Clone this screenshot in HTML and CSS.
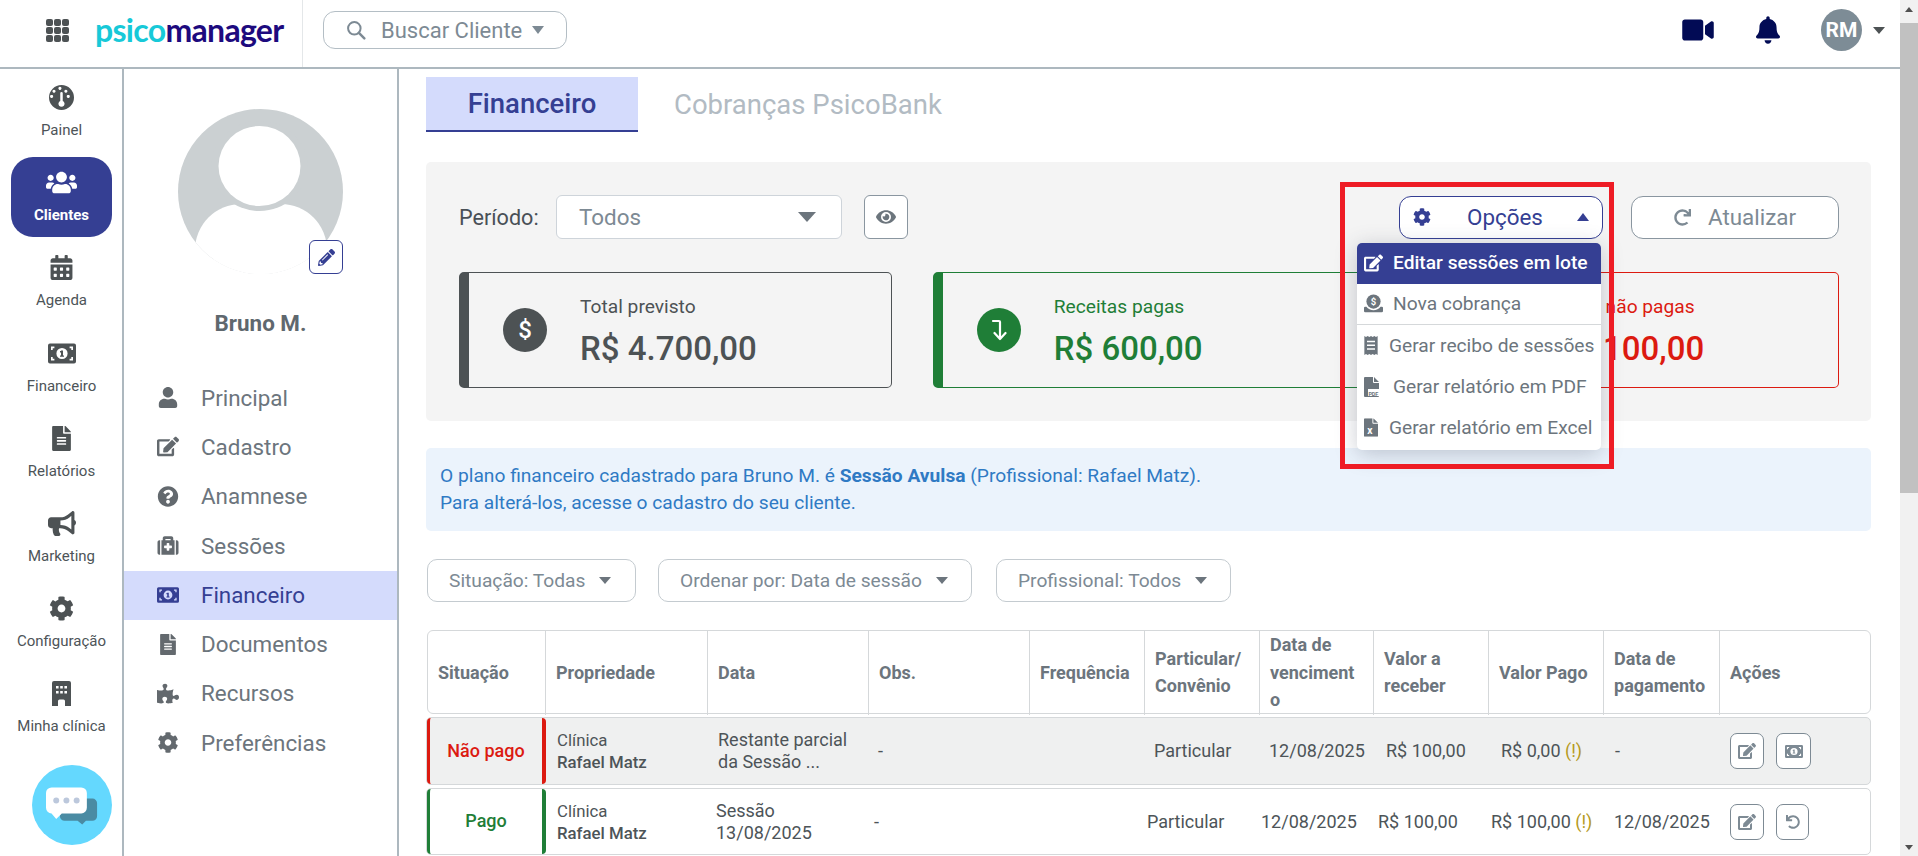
FILE: index.html
```html
<!DOCTYPE html>
<html lang="pt-BR">
<head>
<meta charset="utf-8">
<title>PsicoManager</title>
<link rel="stylesheet" href="styles.css">
</head>
<body>
<svg class="sprite" xmlns="http://www.w3.org/2000/svg">
  <symbol id="i-search" viewBox="0 0 24 24"><circle cx="10" cy="10" r="7.5" fill="none" stroke="currentColor" stroke-width="2.4"/><path d="M15.5 15.5L22 22" stroke="currentColor" stroke-width="3" stroke-linecap="round"/></symbol>
  <symbol id="i-video" viewBox="0 0 576 512"><path d="M336.2 64H47.8C21.4 64 0 85.4 0 111.8v288.4C0 426.6 21.4 448 47.8 448h288.4c26.4 0 47.8-21.4 47.8-47.8V111.8c0-26.4-21.4-47.8-47.8-47.8zm189.4 37.7L416 177.3v157.4l109.6 75.5c21.2 14.6 50.4-.3 50.4-25.8V127.5c0-25.4-29.1-40.4-50.4-25.8z"/></symbol>
  <symbol id="i-bell" viewBox="0 0 448 512"><path d="M224 512c35.32 0 63.97-28.65 63.97-64H160.03c0 35.35 28.65 64 63.97 64zm215.39-149.71c-19.32-20.76-55.47-51.99-55.47-154.29 0-77.7-54.48-139.9-127.94-155.16V32c0-17.67-14.32-32-31.98-32s-31.98 14.33-31.98 32v20.84C118.56 68.1 64.08 130.3 64.08 208c0 102.3-36.15 133.53-55.47 154.29-6 6.45-8.66 14.16-8.61 21.71.11 16.4 12.98 32 32.1 32h383.8c19.12 0 32-15.6 32.1-32 .05-7.55-2.61-15.27-8.61-21.71z"/></symbol>
  <symbol id="i-cog" viewBox="0 0 512 512"><path d="M487.4 315.7l-42.6-24.6c4.3-23.2 4.3-47 0-70.2l42.6-24.6c4.9-2.8 7.1-8.6 5.5-14-11.1-35.6-30-67.8-54.7-94.6-3.8-4.1-10-5.1-14.8-2.3L380.8 110c-17.9-15.4-38.5-27.3-60.8-35.1V25.8c0-5.6-3.9-10.5-9.4-11.7-36.7-8.2-74.3-7.8-109.2 0-5.5 1.2-9.4 6.1-9.4 11.7V75c-22.2 7.9-42.8 19.8-60.8 35.1L88.7 85.5c-4.9-2.8-11-1.9-14.8 2.3-24.7 26.7-43.6 58.9-54.7 94.6-1.7 5.4.6 11.2 5.5 14L67.3 221c-4.3 23.2-4.3 47 0 70.2l-42.6 24.6c-4.9 2.8-7.1 8.6-5.5 14 11.1 35.6 30 67.8 54.7 94.6 3.8 4.1 10 5.1 14.8 2.3l42.6-24.6c17.9 15.4 38.5 27.3 60.8 35.1v49.2c0 5.6 3.9 10.5 9.4 11.7 36.7 8.2 74.3 7.8 109.2 0 5.5-1.2 9.4-6.1 9.4-11.7v-49.2c22.2-7.9 42.8-19.8 60.8-35.1l42.6 24.6c4.9 2.8 11 1.9 14.8-2.3 24.7-26.7 43.6-58.9 54.7-94.6 1.5-5.5-.7-11.3-5.6-14.1zM256 336c-44.1 0-80-35.9-80-80s35.9-80 80-80 80 35.9 80 80-35.9 80-80 80z"/></symbol>
  <symbol id="i-user" viewBox="0 0 448 512"><path d="M224 256c70.7 0 128-57.3 128-128S294.7 0 224 0 96 57.3 96 128s57.3 128 128 128zm89.6 32h-16.7c-22.2 10.2-46.9 16-72.9 16s-50.6-5.8-72.9-16h-16.7C60.2 288 0 348.2 0 422.4V464c0 26.5 21.5 48 48 48h352c26.5 0 48-21.5 48-48v-41.6c0-74.2-60.2-134.4-134.4-134.4z"/></symbol>
  <symbol id="i-edit" viewBox="0 0 576 512"><path d="M402.6 83.2l90.2 90.2c3.8 3.8 3.8 10 0 13.8L274.4 405.6l-92.8 10.3c-12.4 1.4-22.9-9.1-21.5-21.5l10.3-92.8L388.8 83.2c3.8-3.8 10-3.8 13.8 0zm162-22.9l-48.8-48.8c-15.2-15.2-39.9-15.2-55.2 0l-35.4 35.4c-3.8 3.8-3.8 10 0 13.8l90.2 90.2c3.8 3.8 10 3.8 13.8 0l35.4-35.4c15.2-15.3 15.2-40 0-55.2zM384 346.2V448H64V128h229.8c3.2 0 6.2-1.3 8.5-3.5l40-40c7.6-7.6 2.2-20.5-8.5-20.5H48C21.5 64 0 85.5 0 112v352c0 26.5 21.5 48 48 48h352c26.5 0 48-21.5 48-48V306.2c0-10.7-12.9-16-20.5-8.5l-40 40c-2.2 2.3-3.5 5.3-3.5 8.5z"/></symbol>
  <symbol id="i-question" viewBox="0 0 512 512"><path d="M504 256c0 136.997-111.043 248-248 248S8 392.997 8 256C8 119.083 119.043 8 256 8s248 111.083 248 248zM262.655 90c-54.497 0-89.255 22.957-116.549 63.758-3.536 5.286-2.353 12.415 2.715 16.258l34.699 26.31c5.205 3.947 12.621 3.008 16.665-2.122 17.864-22.658 30.113-35.797 57.303-35.797 20.429 0 45.698 13.148 45.698 32.958 0 14.976-12.363 22.667-32.534 33.976C247.128 238.528 216 254.941 216 296v4c0 6.627 5.373 12 12 12h56c6.627 0 12-5.373 12-12v-1.333c0-28.462 83.186-29.647 83.186-106.667 0-58.002-60.165-102-116.531-102zM256 338c-25.365 0-46 20.635-46 46 0 25.364 20.635 46 46 46s46-20.636 46-46c0-25.365-20.635-46-46-46z"/></symbol>
  <symbol id="i-file" viewBox="0 0 384 512"><path d="M224 136V0H24C10.7 0 0 10.7 0 24v464c0 13.3 10.7 24 24 24h336c13.3 0 24-10.7 24-24V160H248c-13.2 0-24-10.8-24-24zm64 236c0 6.6-5.4 12-12 12H108c-6.6 0-12-5.4-12-12v-8c0-6.6 5.4-12 12-12h168c6.6 0 12 5.4 12 12v8zm0-64c0 6.6-5.4 12-12 12H108c-6.6 0-12-5.4-12-12v-8c0-6.6 5.4-12 12-12h168c6.6 0 12 5.4 12 12v8zm0-72v8c0 6.6-5.4 12-12 12H108c-6.6 0-12-5.4-12-12v-8c0-6.6 5.4-12 12-12h168c6.6 0 12 5.4 12 12zm96-114.1v6.1H256V0h6.1c6.4 0 12.5 2.5 17 7l97.9 98c4.5 4.5 7 10.6 7 16.9z"/></symbol>
  <symbol id="i-bullhorn" viewBox="0 0 576 512"><path d="M576 240c0-23.63-12.95-44.04-32-55.12V32.01C544 23.26 537.02 0 512 0c-7.12 0-14.19 2.38-19.98 7.02l-85.03 68.03C364.28 109.19 310.66 128 256 128H64c-35.35 0-64 28.65-64 64v96c0 35.35 28.65 64 64 64h33.7c-1.39 10.48-2.18 21.14-2.18 32 0 39.77 9.26 77.35 25.56 110.94 5.19 10.69 16.52 17.06 28.4 17.06h74.28c26.05 0 41.69-29.84 25.9-50.56-16.4-21.52-26.15-48.36-26.15-77.44 0-11.11 1.62-21.79 4.41-32H256c54.66 0 108.28 18.81 150.98 52.95l85.03 68.03a32.023 32.023 0 0 0 19.98 7.02c24.92 0 32-22.78 32-32V295.13C563.05 284.04 576 263.63 576 240zm-96 141.42l-33.05-26.44C392.95 311.78 325.12 288 256 288v-96c69.12 0 136.95-23.78 190.95-66.98L480 98.58v282.84z"/></symbol>
  <symbol id="i-puzzle" viewBox="0 0 576 512"><path d="M519.442 288.651c-41.519 0-59.5 31.593-82.058 31.593C377.409 320.244 432 144 432 144s-196.288 80-196.288-3.297c0-35.827 36.288-46.25 36.288-85.985C272 19.216 243.885 0 210.539 0c-34.654 0-66.366 18.891-66.366 56.346 0 41.364 31.711 59.277 31.711 81.75C175.885 207.719 0 166.758 0 166.758v333.237s178.635 45.484 178.635-21.285c0-22.473-40-40.107-40-81.471 0-37.456 31.711-56.346 65.991-56.346 33.673 0 61.788 19.216 61.788 54.717 0 39.735-36.288 50.158-36.288 85.985 0 60.803 129.675 25.73 181.23 25.73 0 0-34.725-120.101 25.827-120.101 35.962 0 46.423 36.152 86.308 36.152C556.712 416 576 387.99 576 354.443c0-34.199-18.962-65.792-56.558-65.792z"/></symbol>
  <symbol id="i-calendar" viewBox="0 0 448 512"><path d="M0 464c0 26.5 21.5 48 48 48h352c26.5 0 48-21.5 48-48V192H0v272zm320-196c0-6.6 5.4-12 12-12h40c6.6 0 12 5.4 12 12v40c0 6.6-5.4 12-12 12h-40c-6.6 0-12-5.4-12-12v-40zm0 128c0-6.6 5.4-12 12-12h40c6.6 0 12 5.4 12 12v40c0 6.6-5.4 12-12 12h-40c-6.6 0-12-5.4-12-12v-40zM192 268c0-6.6 5.4-12 12-12h40c6.6 0 12 5.4 12 12v40c0 6.6-5.4 12-12 12h-40c-6.6 0-12-5.4-12-12v-40zm0 128c0-6.6 5.4-12 12-12h40c6.6 0 12 5.4 12 12v40c0 6.6-5.4 12-12 12h-40c-6.6 0-12-5.4-12-12v-40zM64 268c0-6.6 5.4-12 12-12h40c6.6 0 12 5.4 12 12v40c0 6.6-5.4 12-12 12H76c-6.6 0-12-5.4-12-12v-40zm0 128c0-6.6 5.4-12 12-12h40c6.6 0 12 5.4 12 12v40c0 6.6-5.4 12-12 12H76c-6.6 0-12-5.4-12-12v-40zM400 64h-48V16c0-8.8-7.2-16-16-16h-32c-8.8 0-16 7.2-16 16v48H160V16c0-8.8-7.2-16-16-16h-32c-8.8 0-16 7.2-16 16v48H48C21.5 64 0 85.5 0 112v48h448v-48c0-26.5-21.5-48-48-48z"/></symbol>
  <symbol id="i-users" viewBox="0 0 640 512"><path d="M96 224c35.3 0 64-28.7 64-64s-28.7-64-64-64-64 28.7-64 64 28.7 64 64 64zm448 0c35.3 0 64-28.7 64-64s-28.7-64-64-64-64 28.7-64 64 28.7 64 64 64zm32 32h-64c-17.6 0-33.5 7.1-45.1 18.6 40.3 22.1 68.9 62 75.1 109.4h66c17.7 0 32-14.3 32-32v-32c0-35.3-28.7-64-64-64zm-256 0c61.9 0 112-50.1 112-112S381.9 32 320 32 208 82.1 208 144s50.1 112 112 112zm76.8 32h-8.3c-20.8 10-43.9 16-68.5 16s-47.6-6-68.5-16h-8.3C179.6 288 128 339.6 128 403.2V432c0 26.5 21.5 48 48 48h288c26.5 0 48-21.5 48-48v-28.8c0-63.6-51.6-115.2-115.2-115.2zm-223.7-13.4C161.5 263.1 145.6 256 128 256H64c-35.3 0-64 28.7-64 64v32c0 17.7 14.3 32 32 32h65.9c6.3-47.4 34.9-87.3 75.2-109.4z"/></symbol>
  <symbol id="i-medkit" viewBox="0 0 512 512"><path d="M96 480h320V128h-32V80c0-26.51-21.49-48-48-48H176c-26.51 0-48 21.49-48 48v48H96v352zm96-384h128v32H192V96zm320 80v256c0 26.51-21.49 48-48 48h-16V128h16c26.51 0 48 21.49 48 48zM64 480H48c-26.51 0-48-21.49-48-48V176c0-26.51 21.49-48 48-48h16v352zm288-208v32c0 8.837-7.163 16-16 16h-48v48c0 8.837-7.163 16-16 16h-32c-8.837 0-16-7.163-16-16v-48h-48c-8.837 0-16-7.163-16-16v-32c0-8.837 7.163-16 16-16h48v-48c0-8.837 7.163-16 16-16h32c8.837 0 16 7.163 16 16v48h48c8.837 0 16 7.163 16 16z"/></symbol>
  <symbol id="i-pencil" viewBox="0 0 512 512"><path d="M497.9 142.1l-46.1 46.1c-4.7 4.7-12.3 4.7-17 0l-111-111c-4.7-4.7-4.7-12.3 0-17l46.1-46.1c18.7-18.7 49.1-18.7 67.9 0l60.1 60.1c18.8 18.7 18.8 49.1 0 67.9zM284.2 99.8L21.6 362.4.4 483.9c-2.9 16.4 11.4 30.6 27.8 27.8l121.5-21.3 262.6-262.6c4.7-4.7 4.7-12.3 0-17l-111-111c-4.8-4.7-12.4-4.7-17.1 0zM124.1 339.9c-5.5-5.5-5.5-14.3 0-19.8l154-154c5.5-5.5 14.3-5.5 19.8 0s5.5 14.3 0 19.8l-154 154c-5.5 5.5-14.3 5.5-19.8 0zM88 424h48v36.3l-64.5 11.3-31.1-31.1L51.7 376H88v48z"/></symbol>
  <symbol id="i-eye" viewBox="0 0 576 512"><path d="M572.52 241.4C518.29 135.59 410.93 64 288 64S57.68 135.64 3.48 241.41a32.35 32.35 0 0 0 0 29.19C57.71 376.41 165.07 448 288 448s230.32-71.64 284.52-177.41a32.35 32.35 0 0 0 0-29.19zM288 400a144 144 0 1 1 144-144 143.93 143.93 0 0 1-144 144zm0-240a95.31 95.31 0 0 0-25.31 3.79 47.85 47.85 0 0 1-66.9 66.9A95.78 95.78 0 1 0 288 160z"/></symbol>
  <symbol id="i-redo" viewBox="0 0 512 512"><path d="M500.33 0h-47.41a12 12 0 0 0-12 12.57l4 82.76A247.42 247.42 0 0 0 256 8C119.34 8 7.9 119.53 8 256.19 8.1 393.07 119.1 504 256 504a247.1 247.1 0 0 0 166.18-63.91 12 12 0 0 0 .48-17.43l-34-34a12 12 0 0 0-16.38-.55A176 176 0 1 1 402.1 157.8l-101.53-4.87a12 12 0 0 0-12.57 12v47.41a12 12 0 0 0 12 12h200.33a12 12 0 0 0 12-12V12a12 12 0 0 0-12-12z"/></symbol>
  <symbol id="i-undo" viewBox="0 0 512 512"><path d="M212.333 224.333H12c-6.627 0-12-5.373-12-12V12C0 5.373 5.373 0 12 0h48c6.627 0 12 5.373 12 12v78.112C117.773 39.279 184.26 7.47 258.175 8.007c136.906.994 246.448 111.623 246.157 248.532C504.041 393.258 393.12 504 256.333 504c-64.089 0-122.496-24.313-166.51-64.215-5.099-4.622-5.334-12.554-.467-17.42l33.967-33.967c4.474-4.474 11.662-4.717 16.401-.525C170.76 415.336 211.58 432 256.333 432c97.268 0 176-78.716 176-176 0-97.267-78.716-176-176-176-58.496 0-110.28 28.476-142.274 72.333h98.274c6.627 0 12 5.373 12 12v48c0 6.627-5.373 12-12 12z"/></symbol>
  <symbol id="i-money" viewBox="0 0 28 20"><path fill-rule="evenodd" d="M2 0h24a2 2 0 0 1 2 2v16a2 2 0 0 1-2 2H2a2 2 0 0 1-2-2V2a2 2 0 0 1 2-2zM14 4.4a5.6 5.6 0 1 0 0 11.2 5.6 5.6 0 0 0 0-11.2zM3 3v3.4h1.7V4.7h1.7V3zM25 3h-3.4v1.7h1.7v1.7H25zM3 17v-3.4h1.7v1.7h1.7V17zM25 17h-3.4v-1.7h1.7v-1.7H25z"/><path d="M13 7h2v6h-2zM12 7.5h2v1.4h-2zM12 12h4v1.2h-4z"/></symbol>
  <symbol id="i-gauge" viewBox="0 0 24 24"><path fill-rule="evenodd" d="M12 0a12 12 0 1 1 0 24 12 12 0 0 1 0-24zM12 3.2a1.5 1.5 0 1 0 0 .01zM6.3 6a1.5 1.5 0 1 0 0 .01zM17.7 6a1.5 1.5 0 1 0 0 .01zM4 11a1.5 1.5 0 1 0 0 .01zM20 11a1.5 1.5 0 1 0 0 .01zM10.8 8v7.4a2.9 2.9 0 1 0 2.4 0V8a1.2 1.2 0 0 0-2.4 0z"/></symbol>
  <symbol id="i-building" viewBox="0 0 19 25"><path fill-rule="evenodd" d="M2 0h15a2 2 0 0 1 2 2v23h-6v-5a1.5 1.5 0 0 0-1.5-1.5h-4A1.5 1.5 0 0 0 6 20v5H0V2a2 2 0 0 1 2-2zM4 5v2.6h2.6V5zM8.2 5v2.6h2.6V5zM12.4 5v2.6H15V5zM4 10v2.6h2.6V10zM8.2 10v2.6h2.6V10zM12.4 10v2.6H15V10z"/></symbol>
  <symbol id="i-receipt" viewBox="0 0 14 20"><path fill-rule="evenodd" d="M0 0l1.75 1L3.5 0l1.75 1L7 0l1.75 1L10.5 0l1.75 1L14 0v20l-1.75-1-1.75 1-1.75-1L7 20l-1.75-1-1.75 1-1.75-1L0 20zM2.8 5v1.6h8.4V5zM2.8 9v1.6h8.4V9zM2.8 13v1.6h8.4V13z"/></symbol>
  <symbol id="i-sheet" viewBox="0 0 15 20"><path d="M1 0h8v5a1 1 0 0 0 1 1h5v13a1 1 0 0 1-1 1H1a1 1 0 0 1-1-1V1a1 1 0 0 1 1-1zM10 0l5 5h-5z"/></symbol>
</svg>

<div class="app">
  <div class="page">
    <header class="topbar">
      <div class="brand">
        <div class="apps"><i></i><i></i><i></i><i></i><i></i><i></i><i></i><i></i><i></i></div>
        <div class="logo"><span class="logo-a">psico</span><span class="logo-b">manager</span></div>
      </div>
      <button class="search"><svg class="search-icon"><use href="#i-search"/></svg><span>Buscar Cliente</span><b class="caret caret-grey"></b></button>
      <div class="top-right">
        <svg class="top-video"><use href="#i-video"/></svg>
        <svg class="top-bell"><use href="#i-bell"/></svg>
        <div class="avatar-small">RM</div>
        <b class="caret caret-dark"></b>
      </div>
    </header>

    <div class="body">
      <nav class="rail">
        <a class="rail-item"><svg class="r-i r-gauge"><use href="#i-gauge"/></svg><span>Painel</span></a>
        <a class="rail-item active"><svg class="r-i r-users"><use href="#i-users"/></svg><span>Clientes</span></a>
        <a class="rail-item"><svg class="r-i r-cal"><use href="#i-calendar"/></svg><span>Agenda</span></a>
        <a class="rail-item"><svg class="r-i r-money"><use href="#i-money"/></svg><span>Financeiro</span></a>
        <a class="rail-item"><svg class="r-i r-file"><use href="#i-file"/></svg><span>Relatórios</span></a>
        <a class="rail-item"><svg class="r-i r-horn"><use href="#i-bullhorn"/></svg><span>Marketing</span></a>
        <a class="rail-item"><svg class="r-i r-cog"><use href="#i-cog"/></svg><span>Configuração</span></a>
        <a class="rail-item"><svg class="r-i r-bld"><use href="#i-building"/></svg><span>Minha clínica</span></a>
      </nav>

      <aside class="client">
        <div class="photo">
          <svg class="photo-svg" viewBox="0 0 165 165">
            <defs><clipPath id="disc"><circle cx="82.5" cy="82.5" r="82.5"/></clipPath></defs>
            <circle cx="82.5" cy="82.5" r="82.5" class="ph-bg"/>
            <g clip-path="url(#disc)">
              <rect x="17" y="95" width="132" height="110" rx="46" class="ph-w"/>
              <rect x="0" y="150" width="165" height="20" class="ph-w"/>
              <ellipse cx="81.5" cy="57" rx="48" ry="45" class="ph-bg"/>
              <ellipse cx="81.5" cy="57" rx="41" ry="40" class="ph-w"/>
            </g>
          </svg>
          <button class="photo-edit"><svg class="photo-pencil"><use href="#i-pencil"/></svg></button>
        </div>
        <div class="client-name">Bruno M.</div>
        <ul class="client-menu">
          <li><svg class="c-i"><use href="#i-user"/></svg>Principal</li>
          <li><svg class="c-i"><use href="#i-edit"/></svg>Cadastro</li>
          <li><svg class="c-i"><use href="#i-question"/></svg>Anamnese</li>
          <li><svg class="c-i"><use href="#i-medkit"/></svg>Sessões</li>
          <li class="on"><svg class="c-i c-money"><use href="#i-money"/></svg>Financeiro</li>
          <li><svg class="c-i"><use href="#i-file"/></svg>Documentos</li>
          <li><svg class="c-i"><use href="#i-puzzle"/></svg>Recursos</li>
          <li><svg class="c-i"><use href="#i-cog"/></svg>Preferências</li>
        </ul>
      </aside>

      <main class="content">
        <div class="tabs">
          <div class="tab tab-on">Financeiro</div>
          <div class="tab">Cobranças PsicoBank</div>
        </div>

        <section class="panel">
          <div class="panel-top">
            <label class="period-label">Período:</label>
            <div class="select"><span>Todos</span><b class="caret caret-lg"></b></div>
            <button class="eye-btn"><svg class="eye"><use href="#i-eye"/></svg></button>
            <div class="grow"></div>
            <div class="options-wrap">
              <button class="options"><svg class="opt-cog"><use href="#i-cog"/></svg><span>Opções</span><b class="caret caret-up"></b></button>
              <div class="menu">
                <div class="menu-item first"><svg class="m-i m-edit"><use href="#i-edit"/></svg>Editar sessões em lote</div>
                <div class="menu-item sep"><svg class="m-i m-coin" viewBox="0 0 24 24"><circle cx="12" cy="9.500" r="9"/><path d="M0 17.500a1.500 1.500 0 0 1 1.500-1.500h1.600a11 11 0 0 0 17.800 0h1.600a1.500 1.500 0 0 1 1.500 1.500v4a1.500 1.500 0 0 1-1.500 1.500h-21A1.500 1.500 0 0 1 0 21.500z"/><text x="8.400" y="14" class="mini-usd">$</text></svg>Nova cobrança</div>
                <div class="menu-item tight"><svg class="m-i m-rec"><use href="#i-receipt"/></svg>Gerar recibo de sessões</div>
                <div class="menu-item"><svg class="m-i m-pdf" viewBox="0 0 18 20"><use href="#i-sheet" width="15" height="20"/><rect x="4" y="12" width="14" height="7" fill="#fff"/><text x="4.500" y="18.500" class="mini">PDF</text></svg>Gerar relatório em PDF</div>
                <div class="menu-item tight"><svg class="m-i m-xls" viewBox="0 0 15 20"><use href="#i-sheet"/><text x="3.600" y="17.500" class="mini-x">x</text></svg>Gerar relatório em Excel</div>
              </div>
              <div class="highlight"></div>
            </div>
            <button class="refresh"><svg class="redo"><use href="#i-redo"/></svg><span>Atualizar</span></button>
          </div>
          <div class="cards">
            <div class="card card-dark">
              <div class="card-icon"><span>$</span></div>
              <div class="card-text"><div class="card-label">Total previsto</div><div class="card-value">R$ 4.700,00</div></div>
            </div>
            <div class="card card-green">
              <div class="card-icon"><svg class="arrow" viewBox="0 0 16 24"><path d="M2 3h6a1 1 0 0 1 1 1v16M3.500 15l5.500 6 5.500-6" fill="none" stroke="#fff" stroke-width="2.200" stroke-linecap="round" stroke-linejoin="round"/></svg></div>
              <div class="card-text"><div class="card-label">Receitas pagas</div><div class="card-value">R$ 600,00</div></div>
            </div>
            <div class="card card-red">
              <div class="card-icon"></div>
              <div class="card-text"><div class="card-label">Receitas não pagas</div><div class="card-value">R$ 4.100,00</div></div>
            </div>
          </div>
        </section>

        <div class="alert">O plano financeiro cadastrado para Bruno M. é <strong>Sessão Avulsa</strong> (Profissional: Rafael Matz).<br>Para alterá-los, acesse o cadastro do seu cliente.</div>

        <div class="filters">
          <button class="filter f1">Situação: Todas<b class="caret caret-filter"></b></button>
          <button class="filter f2">Ordenar por: Data de sessão<b class="caret caret-filter"></b></button>
          <button class="filter f3">Profissional: Todos<b class="caret caret-filter"></b></button>
        </div>

        <div class="thead">
          <div>Situação</div><div>Propriedade</div><div>Data</div><div>Obs.</div><div>Frequência</div><div>Particular/<br>Convênio</div><div>Data de vencimento</div><div>Valor a<br>receber</div><div>Valor Pago</div><div>Data de<br>pagamento</div><div>Ações</div>
        </div>

        <div class="row row-a">
          <div class="status st-red">Não pago</div>
          <div class="prop">Clínica<br><strong>Rafael Matz</strong></div>
          <div>Restante parcial<br>da Sessão ...</div>
          <div>-</div>
          <div>Particular</div>
          <div>12/08/2025</div>
          <div>R$ 100,00</div>
          <div>R$ 0,00 <em>(!)</em></div>
          <div>-</div>
          <div class="acts"><button class="act a1"><svg class="act-i"><use href="#i-edit"/></svg></button><button class="act a2"><svg class="act-money"><use href="#i-money"/></svg></button></div>
        </div>
        <div class="row row-b">
          <div class="status st-green">Pago</div>
          <div class="prop">Clínica<br><strong>Rafael Matz</strong></div>
          <div>Sessão<br>13/08/2025</div>
          <div>-</div>
          <div>Particular</div>
          <div>12/08/2025</div>
          <div>R$ 100,00</div>
          <div>R$ 100,00 <em>(!)</em></div>
          <div>12/08/2025</div>
          <div class="acts"><button class="act a1"><svg class="act-i"><use href="#i-edit"/></svg></button><button class="act a3"><svg class="act-undo"><use href="#i-undo"/></svg></button></div>
        </div>
      </main>
    </div>
  </div>

  <div class="scrollbar">
    <div class="sb-btn"><b class="sb-up"></b></div>
    <div class="sb-thumb"></div>
    <div class="sb-rest"></div>
    <div class="sb-btn"><b class="sb-down"></b></div>
  </div>

  <button class="chat">
    <svg viewBox="0 0 56 40" class="chat-svg">
      <path d="M18 12h32a5 5 0 0 1 5 5v14a5 5 0 0 1-5 5h-7l-4 4-5-4H20a5 5 0 0 1-5-5z" fill="#4a8ba3"/>
      <path d="M6 0h32a6 6 0 0 1 6 6v16a6 6 0 0 1-6 6H17l-6 6-5-6a6 6 0 0 1-6-6V6a6 6 0 0 1 6-6z" fill="#fff"/>
      <circle cx="11" cy="14" r="3.200" fill="#bcc8dc"/><circle cx="22" cy="14" r="3.200" fill="#bcc8dc"/><circle cx="33" cy="14" r="3.200" fill="#bcc8dc"/>
    </svg>
  </button>
</div>
</body>
</html>
```

FILE: styles.css
```css
* { box-sizing: border-box; }
html, body { margin: 0; height: 100%; overflow: hidden; background: #fff; }
body { font-family: Roboto, "Liberation Sans", sans-serif; color: #495057; }
button { font-family: inherit; background: #fff; cursor: pointer; padding: 0; }
svg { fill: currentColor; display: block; flex: none; }
.sprite { display: none; }
ul { list-style: none; margin: 0; padding: 0; }

.app { display: flex; height: 856px; width: 1918px; }
.page { width: 1900px; display: flex; flex-direction: column; }

/* carets */
.caret { display: block; width: 0; height: 0; border-style: solid; border-color: transparent; flex: none; }
.caret-grey { border-width: 8px 6.5px 0; border-top-color: #7d8a94; margin-left: 10px; }
.caret-dark { border-width: 7px 6.5px 0; border-top-color: #4d5254; margin-left: 11px; }
.caret-lg { border-width: 10px 9px 0; border-top-color: #6c757d; margin-left: auto; }
.caret-up { border-width: 0 6.5px 8px; border-bottom-color: #353f93; margin-left: auto; }
.caret-filter { border-width: 7px 6.5px 0; border-top-color: #6c757d; margin-left: 14px; }

/* top bar */
.topbar { height: 69px; border-bottom: 2px solid #adb8bf; display: flex; align-items: flex-start; flex: none; }
.brand { width: 303px; height: 67px; border-right: 1px solid #e4e7e9; display: flex; align-items: flex-start; padding: 19px 0 0 46px; }
.apps { width: 23px; height: 23px; display: grid; grid-template-columns: repeat(3, 7px); grid-auto-rows: 7px; gap: 1px; }
.apps i { background: #4d5254; border-radius: 2px; }
.logo { margin: -7px 0 0 26px; font-family: Lato, sans-serif; font-weight: 700; font-size: 32px; letter-spacing: -.7px; line-height: 36px; white-space: nowrap; }
.logo-a { color: #17c9d8; }
.logo-b { color: #1d0a7e; }
.search { margin: 11px 0 0 20px; width: 244px; height: 38px; border: 1px solid #b4bec5; border-radius: 12px; display: flex; align-items: center; padding-left: 22px; font-size: 22px; color: #7d8a94; }
.search-icon { width: 20px; height: 20px; margin-right: 15px; color: #7d8a94; }
.top-right { margin: 9px 0 0 auto; display: flex; align-items: center; padding-right: 15px; height: 42px; }
.top-video { width: 32px; height: 28px; color: #020b55; margin-right: 42px; }
.top-bell { width: 24px; height: 28px; color: #020b55; margin-right: 41px; }
.avatar-small { width: 41px; height: 42px; border-radius: 50%; background: #7d8c96; color: #fff; font-weight: 700; font-size: 21px; display: flex; align-items: center; justify-content: center; }

.body { flex: 1; display: flex; min-height: 0; }

/* main rail */
.rail { width: 124px; border-right: 2px solid #adb8bf; padding: 3px 0 0 11px; flex: none; }
.rail-item { width: 101px; height: 80px; margin-bottom: 5.2px; border-radius: 22px; padding-top: 13px; display: flex; flex-direction: column; align-items: center; font-size: 15px; color: #4d5458; }
.rail-item span { line-height: 20px; margin-top: 10px; white-space: nowrap; }
.rail-item.active { background: #353f93; color: #fff; font-weight: 700; }
.r-i { height: 25px; width: 25px; color: #4d5254; }
.active .r-i { color: #fff; }
.r-users { width: 31px; }
.r-money { width: 28px; }
.r-horn { width: 28px; }

/* client column */
.client { width: 275px; border-right: 2px solid #adb8bf; padding-top: 40px; flex: none; }
.photo { width: 165px; height: 165px; margin: 0 auto; position: relative; }
.photo-svg { width: 165px; height: 165px; }
.ph-bg { fill: #cbd0d2; }
.ph-w { fill: #fff; }
.photo-edit { position: absolute; right: 0; bottom: 0; width: 34px; height: 34px; border: 1px solid #353f93; border-radius: 6px; color: #353f93; display: flex; align-items: center; justify-content: center; }
.photo-pencil { width: 17px; height: 17px; }
.client-name { text-align: center; font-size: 22.4px; font-weight: 700; color: #5f686e; line-height: 28px; margin: 35px 0 37px; }
.client-menu li { height: 49.3px; display: flex; align-items: center; padding: 0 0 2px 33px; font-size: 22.4px; color: #6c757d; }
.c-i { width: 22px; height: 21px; margin-right: 22px; color: #63696e; }
.client-menu li.on { background: #d4dbfc; color: #353f93; }
.on .c-i { color: #353f93; height: 16px; }

/* content */
.content { flex: 1; padding: 8px 29px 0 27px; min-width: 0; overflow: hidden; }
.tabs { display: flex; height: 55px; }
.tab { display: flex; align-items: center; font-size: 27.5px; color: #b2bbc3; padding-left: 36px; }
.tab-on { width: 212px; padding: 0; justify-content: center; background: #d4dbfc; color: #353f93; font-weight: 500; border-bottom: 2px solid #353f93; }

.panel { margin-top: 30px; height: 259px; background: #f4f4f4; border-radius: 5px; padding: 33px 32px 33px 33px; }
.panel-top { display: flex; align-items: center; height: 44px; }
.period-label { font-size: 21.6px; color: #495057; width: 97px; }
.select { width: 286px; height: 44px; background: #fff; border: 1px solid #ced4da; border-radius: 6px; display: flex; align-items: center; padding: 0 25px 0 22px; font-size: 22.4px; color: #7d8a94; }
.eye-btn { margin-left: 22px; width: 44px; height: 44px; border: 1px solid #8a96a0; border-radius: 6px; display: flex; align-items: center; justify-content: center; color: #6c757d; }
.eye { width: 20px; height: 18px; }
.grow { flex: 1; }
.options-wrap { position: relative; width: 204px; height: 43px; }
.options { width: 204px; height: 43px; border: 1px solid #353f93; border-radius: 12px; color: #353f93; display: flex; align-items: center; padding: 0 13px; font-size: 22.4px; }
.opt-cog { width: 18px; height: 18px; }
.options span { margin-left: 36px; }
.menu { position: absolute; left: -42px; top: 47px; width: 244px; height: 207px; background: #fff; border-radius: 5px; box-shadow: 0 4px 22px rgba(60, 70, 90, .28); overflow: hidden; font-size: 19.2px; color: #6c757d; }
.menu-item { height: 41.2px; display: flex; align-items: center; padding-left: 36px; position: relative; white-space: nowrap; }
.menu-item.tight { padding-left: 32px; }
.menu-item.first { background: #353f93; color: #fff; font-weight: 500; padding-bottom: 1px; }
.menu-item.sep { border-bottom: 1px solid #d5d8da; }
.m-i { position: absolute; left: 7px; top: 11px; width: 18px; height: 19px; color: #6c757d; }
.m-edit { color: #fff; width: 19px; height: 18px; }
.m-coin { width: 19px; height: 19px; top: 10px; }
.m-rec { width: 14px; height: 19px; left: 7px; }
.m-pdf { width: 18px; height: 20px; }
.m-xls { width: 14px; height: 19px; }
.mini { font-size: 5.5px; font-weight: 700; fill: #6c757d; letter-spacing: -.2px; }
.mini-x { font-size: 11px; font-weight: 700; fill: #fff; }
.mini-usd { font-size: 12px; font-weight: 700; fill: #fff; }
.highlight { position: absolute; left: -59px; top: -14px; width: 274px; height: 287px; border: 5px solid #ee1c25; pointer-events: none; }
.refresh { margin-left: 28px; width: 208px; height: 43px; border: 1px solid #8a96a0; border-radius: 12px; color: #7d8a94; display: flex; align-items: center; justify-content: center; font-size: 22.4px; }
.redo { width: 17px; height: 17px; margin-right: 17px; }

.cards { display: flex; gap: 41px; margin-top: 33px; }
.card { flex: 1; height: 116px; border: 1px solid; border-left-width: 10px; border-radius: 5px; display: flex; align-items: center; padding-left: 34px; gap: 33px; }
.card-dark { color: #4d5254; border-color: #4d5254; }
.card-green { color: #1f7e37; border-color: #1f7e37; }
.card-red { color: #dc1a10; border-color: #dc1a10; }
.card-icon { width: 44px; height: 44px; border-radius: 50%; background: currentColor; display: flex; align-items: center; justify-content: center; flex: none; }
.card-icon span { color: #fff; font-size: 24px; font-weight: 500; }
.arrow { width: 16px; height: 24px; }
.card-text { padding-top: 3px; }
.card-label { font-size: 19.2px; line-height: 24px; }
.card-value { font-size: 33px; font-weight: 500; line-height: 40px; margin-top: 10px; }

.alert { margin-top: 27px; height: 83px; background: #ebf3fc; border-radius: 5px; padding: 14px 14px; font-size: 19.2px; line-height: 27px; color: #2f7ac4; }

.filters { display: flex; margin-top: 28px; margin-left: 1px; }
.filter { height: 43px; border: 1px solid #c4cbd0; border-radius: 10px; display: flex; align-items: center; padding-left: 21px; font-size: 19.2px; color: #7d8a94; }
.f1 { width: 209px; }
.f2 { width: 314px; margin-left: 22px; }
.f3 { width: 235px; margin-left: 24px; }

.thead { margin-top: 28px; height: 84px; border: 1px solid #d5d8da; border-radius: 6px; display: grid; grid-template-columns: 118px 162px 161px 161px 115px 115px 114px 115px 115px 116px 1fr; font-size: 18px; font-weight: 700; line-height: 27.6px; color: #6c757d; margin-left: 1px; width: 1444px; }
.thead > div { padding: 0 10px 1px; border-right: 1px solid #d5d8da; display: flex; align-items: center; word-break: break-word; }
.thead > div:last-child { border-right: 0; }

.row { margin-top: 3px; width: 1445px; height: 68px; border: 1px solid #d5d8da; border-radius: 5px; display: grid; align-items: center; font-size: 18px; line-height: 22px; color: #4d5458; }
.row strong { font-weight: 500; }
.row em { font-style: normal; color: #b59a1e; }
.row-a { background: #eff0f0; grid-template-columns: 119px 172px 160px 276px 115px 117px 115px 114px 115px 1fr; }
.row-b { height: 67px; padding-bottom: 2px; grid-template-columns: 119px 170px 158px 273px 114px 117px 113px 123px 116px 1fr; }
.status { height: 66px; display: flex; align-items: center; justify-content: center; border-left: 3px solid; border-right: 4px solid; border-radius: 4px; font-weight: 500; }
.st-red { color: #dc1a10; border-color: #dc1a10; }
.st-green { color: #1f7e37; border-color: #1f7e37; }
.row-b .status { height: 65px; align-self: start; padding-bottom: 2px; }
.prop { padding-left: 11px; font-size: 16.8px; }
.acts { display: flex; gap: 12px; }
.act { width: 34px; height: 36px; background: #fff; border: 1px solid #7d8a94; border-radius: 7px; color: #7d8a94; display: flex; align-items: center; justify-content: center; }
.a2 { width: 35px; }
.a3 { width: 33px; }
.act-i { width: 18px; height: 16px; }
.act-money { width: 18px; height: 13px; }
.act-undo { width: 14px; height: 14px; }

/* scrollbar */
.scrollbar { width: 18px; height: 856px; background: #f1f1f1; display: flex; flex-direction: column; flex: none; }
.sb-btn { height: 18px; display: flex; align-items: center; justify-content: center; flex: none; }
.sb-up { border: solid transparent; border-width: 0 4.5px 5px; border-bottom-color: #505050; }
.sb-down { border: solid transparent; border-width: 5px 4.5px 0; border-top-color: #505050; }
.sb-thumb { height: 470px; background: #c1c1c1; margin-top: 5px; }
.sb-rest { flex: 1; }

/* chat */
.chat { position: fixed; left: 32px; top: 765px; width: 80px; height: 80px; border: 0; border-radius: 50%; background: #64d8fe; display: flex; align-items: center; justify-content: center; }
.chat-svg { width: 52px; height: 38px; margin-top: 2px; }
```
